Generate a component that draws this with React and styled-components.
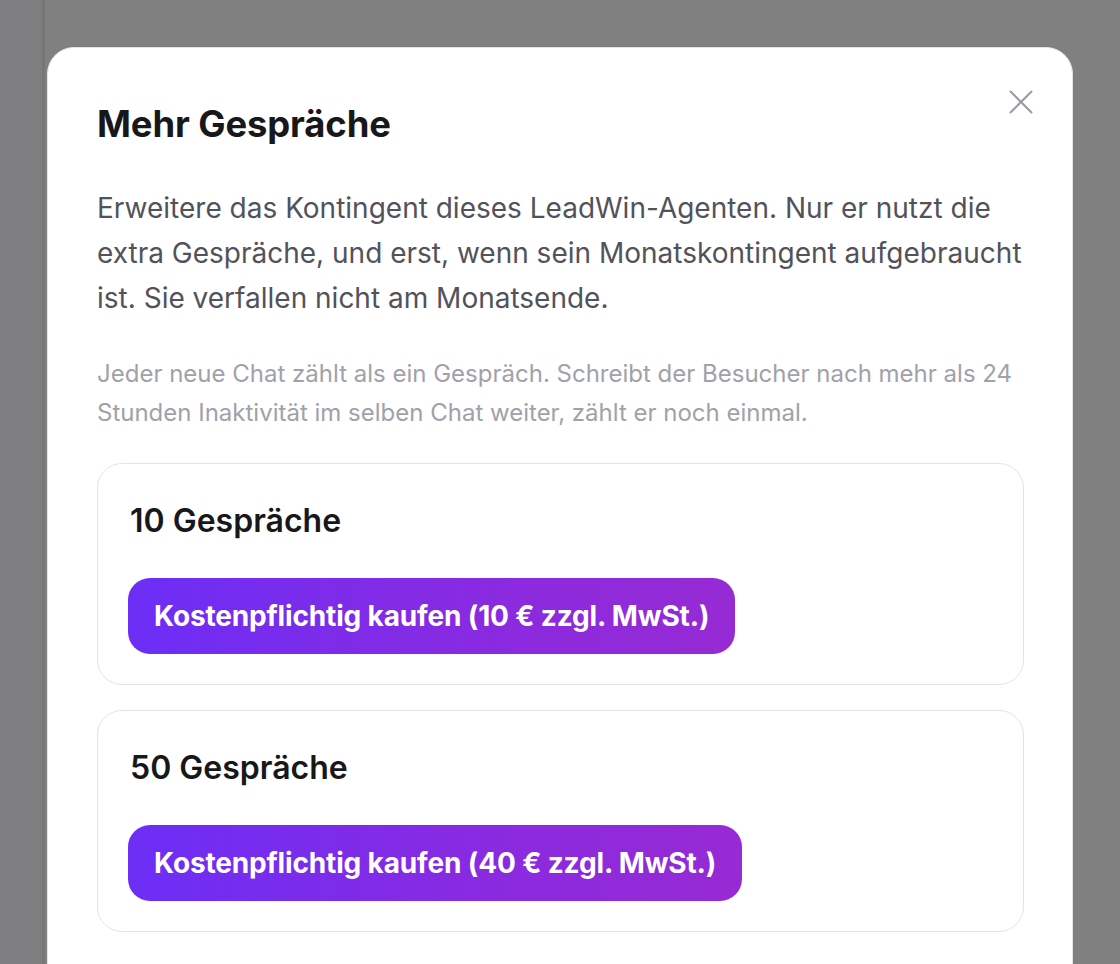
import React from 'react'
import styled, { createGlobalStyle } from 'styled-components'

const GlobalStyle = createGlobalStyle`
  html, body {
    margin: 0;
    padding: 0;
    height: 964px;
    overflow: hidden;
    background: #808080;
    font-family: Inter, "Noto Sans", Arial, sans-serif;
  }
`

const Shell = styled.div`
  display: flex;
  height: 964px;
`

const SideRail = styled.div`
  width: 42px;
  background: #7e7e80;
  border-right: 3px solid #777778;
`

const Main = styled.div`
  flex: 1;
  background: #808080;
`

const Backdrop = styled.div`
  position: fixed;
  inset: 0;
  display: flex;
  justify-content: center;
  align-items: flex-start;
`

const Dialog = styled.div`
  position: relative;
  box-sizing: border-box;
  width: 1026px;
  margin-top: 47px;
  height: 960px;
  background: #fff;
  border: 1px solid #e4e4e7;
  border-radius: 27px;
  padding: 52px 48px 0 49px;
`

const CloseButton = styled.button`
  position: absolute;
  top: 40px;
  right: 37px;
  width: 28px;
  height: 28px;
  padding: 0;
  border: none;
  background: none;
  color: #9a9aa4;
  display: flex;
  align-items: center;
  justify-content: center;
  cursor: pointer;
`

const Title = styled.h2`
  margin: 0;
  font-size: 36.4px;
  line-height: 48px;
  font-weight: 700;
  color: #18181b;
  letter-spacing: -0.1px;
`

const Lead = styled.p`
  margin: 38px 0 0;
  font-size: 28px;
  line-height: 45px;
  color: #52525b;
`

const Note = styled.p`
  margin: 33px 0 0;
  font-size: 24px;
  line-height: 39px;
  color: #a1a1aa;
`

const Packages = styled.div`
  display: flex;
  flex-direction: column;
  gap: 25px;
  margin-top: 31px;
`

const Card = styled.div`
  border: 1px solid #e4e4e7;
  border-radius: 25px;
  padding: 37px 30px 30px;
  display: flex;
  flex-direction: column;
  align-items: flex-start;
  gap: 37px;
`

const CardTitle = styled.h3`
  margin: 0 0 0 2px;
  font-size: 32px;
  line-height: 40px;
  font-weight: 600;
  color: #18181b;
`

const BuyButton = styled.button`
  height: 76px;
  padding: 0 26px;
  border: none;
  border-radius: 22px;
  background: linear-gradient(90deg, #6c2ef6 0%, #8a2ae0 60%, #972ad4 100%);
  color: #fff;
  font-family: inherit;
  font-size: 28px;
  font-weight: 700;
  letter-spacing: -0.15px;
  cursor: pointer;
`

const packages = [
  { count: 10, price: 10 },
  { count: 50, price: 40 },
]

export default function App() {
  return (
    <>
      <GlobalStyle />
      <Shell>
        <SideRail />
        <Main />
      </Shell>
      <Backdrop>
        <Dialog>
          <CloseButton aria-label="Schließen">
            <svg width="24" height="24" viewBox="0 0 24 24" fill="none" stroke="currentColor" strokeWidth="2" strokeLinecap="round">
              <path d="M1.5 1.5 L22.5 22.5 M22.5 1.5 L1.5 22.5" />
            </svg>
          </CloseButton>
          <Title>Mehr Gespräche</Title>
          <Lead>
            Erweitere das Kontingent dieses LeadWin-Agenten. Nur er nutzt die extra Gespräche, und erst, wenn sein
            Monatskontingent aufgebraucht ist. Sie verfallen nicht am Monatsende.
          </Lead>
          <Note>
            Jeder neue Chat zählt als ein Gespräch. Schreibt der Besucher nach mehr als 24 Stunden Inaktivität im selben
            Chat weiter, zählt er noch einmal.
          </Note>
          <Packages>
            {packages.map((p) => (
              <Card key={p.count}>
                <CardTitle>{p.count} Gespräche</CardTitle>
                <BuyButton>Kostenpflichtig kaufen ({p.price} € zzgl. MwSt.)</BuyButton>
              </Card>
            ))}
          </Packages>
        </Dialog>
      </Backdrop>
    </>
  )
}
